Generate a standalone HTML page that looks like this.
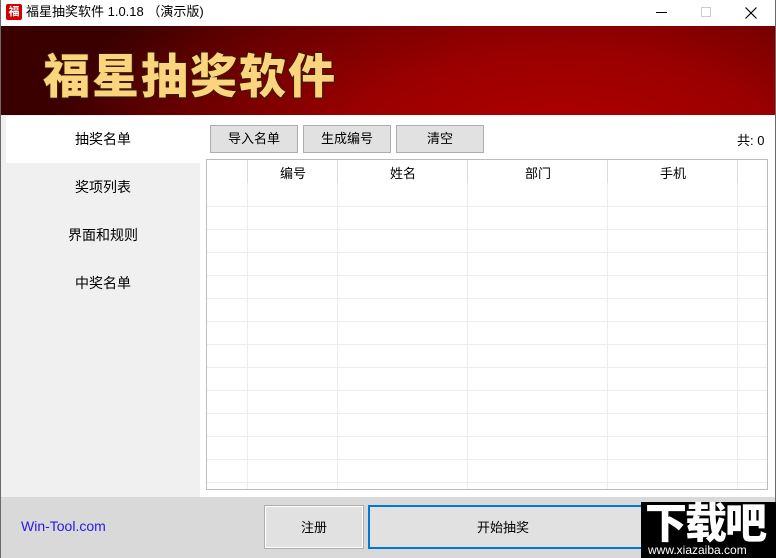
<!DOCTYPE html>
<html><head><meta charset="utf-8"><style>
*{margin:0;padding:0;box-sizing:border-box}
body{width:776px;height:558px;position:relative;overflow:hidden;background:#fff;font-family:"Liberation Sans","Noto Sans CJK SC",sans-serif;font-size:13px;color:#000}
.a{position:absolute}
.btn{position:absolute;background:#e1e1e1;border:1px solid #adadad;text-align:center;font-size:13px}
.nav{position:absolute;left:6px;width:194px;height:47px;line-height:47px;text-align:center;font-size:14px}
</style></head><body>
<div class="a" style="left:0;top:0;width:776px;height:558px;border:1px solid #6a6a6a;border-top:none"></div>
<div class="a" style="left:6px;top:4px;width:16px;height:16px;background:#d40000;border-radius:2px;color:#fff;font-size:11px;line-height:16px;text-align:center;font-weight:bold">福</div>
<div class="a" style="left:26px;top:3px;font-size:13px;line-height:18px">福星抽奖软件 1.0.18 （演示版)</div>
<div class="a" style="left:656px;top:12px;width:11px;height:1px;background:#000"></div>
<div class="a" style="left:701px;top:7px;width:10px;height:10px;border:1px solid #ccc"></div>
<svg class="a" style="left:745px;top:7px" width="12" height="12"><path d="M0.5 0.5L11.5 11.5M11.5 0.5L0.5 11.5" stroke="#000" stroke-width="1.2"/></svg>
<div class="a" style="left:1px;top:26px;width:774px;height:89px;background:radial-gradient(ellipse 520px 260px at 560px 140px,#b80000 0%,#990000 45%,#6a0000 75%,#3a0000 100%)"></div>
<div class="a" style="left:43px;top:43px;font-size:47px;line-height:60px;font-weight:900;color:#fbd57e;letter-spacing:2px;font-family:'Noto Sans CJK SC',sans-serif;-webkit-text-stroke:2px #3a1a00;paint-order:stroke fill">福星抽奖软件</div>
<div class="a" style="left:1px;top:115px;width:199px;height:382px;background:#f0f0f0"></div>
<div class="nav" style="top:116px;background:#fff">抽奖名单</div>
<div class="nav" style="top:164px">奖项列表</div>
<div class="nav" style="top:212px">界面和规则</div>
<div class="nav" style="top:260px">中奖名单</div>
<div class="btn" style="left:210px;top:125px;width:88px;height:28px;line-height:26px">导入名单</div>
<div class="btn" style="left:303px;top:125px;width:88px;height:28px;line-height:26px">生成编号</div>
<div class="btn" style="left:396px;top:125px;width:88px;height:28px;line-height:26px">清空</div>
<div class="a" style="left:737px;top:130px;font-size:13px">共: 0</div>
<div class="a" style="left:206px;top:159px;width:562px;height:331px;border:1px solid #bcbcbc;overflow:hidden">
<svg width="560" height="329" style="position:absolute;left:0;top:0">
<g stroke="#ececec" stroke-width="1">
<path d="M40.5 0V329M130.5 0V329M260.5 0V329M400.5 0V329M530.5 0V329"/>
<path d="M0 46.5H560M0 69.5H560M0 92.5H560M0 115.5H560M0 138.5H560M0 161.5H560M0 184.5H560M0 207.5H560M0 230.5H560M0 253.5H560M0 276.5H560M0 299.5H560M0 322.5H560"/>
</g>
<g stroke="#dcdcdc"><path d="M40.5 0V23M130.5 0V23M260.5 0V23M400.5 0V23M530.5 0V23"/></g>
</svg>
<div class="a" style="left:41px;top:3px;width:90px;text-align:center">编号</div>
<div class="a" style="left:131px;top:3px;width:130px;text-align:center">姓名</div>
<div class="a" style="left:261px;top:3px;width:140px;text-align:center">部门</div>
<div class="a" style="left:401px;top:3px;width:130px;text-align:center">手机</div>
</div>
<div class="a" style="left:1px;top:497px;width:774px;height:61px;background:#d9d9d9"></div>
<div class="a" style="left:21px;top:518px;color:#2a16f0;font-size:14px">Win-Tool.com</div>
<div class="btn" style="left:264px;top:505px;width:100px;height:44px;line-height:44px;border:1px solid #adadad;box-shadow:inset 0 0 0 1px #fff">注册</div>
<div class="btn" style="left:368px;top:505px;width:290px;height:44px;line-height:42px;border:2px solid #0078d7;padding-right:20px">开始抽奖</div>
<div class="a" style="left:641px;top:502px;width:135px;height:56px;background:#000"></div>
<div class="a" style="left:645px;top:498px;color:#fff;font-size:42px;font-weight:900;line-height:46px;letter-spacing:-2px;font-family:'Noto Sans CJK SC',sans-serif">下载吧</div>
<div class="a" style="left:648px;top:543px;color:#fff;font-size:12px;line-height:14px">www.xiazaiba.com</div>
</body></html>
